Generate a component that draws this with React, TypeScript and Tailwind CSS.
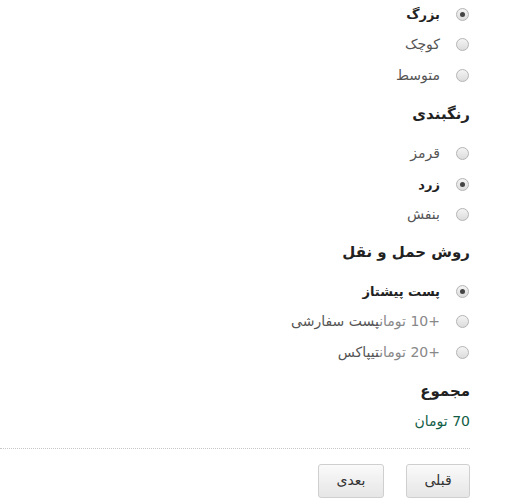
import React from "react";

type Option = { label: string; price?: string; checked?: boolean };

const groups: { title?: string; options: Option[] }[] = [
  {
    options: [
      { label: "بزرگ", checked: true },
      { label: "کوچک" },
      { label: "متوسط" },
    ],
  },
  {
    title: "رنگبندی",
    options: [{ label: "قرمز" }, { label: "زرد", checked: true }, { label: "بنفش" }],
  },
  {
    title: "روش حمل و نقل",
    options: [
      { label: "پست پیشتاز", checked: true },
      { label: "پست سفارشی", price: "+10 تومان" },
      { label: "تیپاکس", price: "+20 تومان" },
    ],
  },
];

const Radio = ({ checked }: { checked?: boolean }) => (
  <span className="flex size-[13px] shrink-0 items-center justify-center rounded-full border border-[#b4b4b4] bg-gradient-to-b from-[#f4f4f4] to-[#dcdcdc]">
    {checked && <span className="size-[5px] rounded-full bg-[#444]"></span>}
  </span>
);

const Heading = ({ children }: { children: React.ReactNode }) => (
  <h2 className="flex h-[30px] items-center text-[15px] font-bold text-[#222]">{children}</h2>
);

const App = () => {
  return (
    <div dir="rtl" className="w-[470px] bg-white font-['DejaVu_Sans',sans-serif] text-[14px] text-[#555]">
      {groups.map((g, gi) => (
        <div key={gi} className={gi === 0 ? "-mt-[1px]" : gi === 1 ? "mt-[9px]" : "mt-[7px]"}>
          {g.title && (
            <div className="mb-[9px]">
              <Heading>{g.title}</Heading>
            </div>
          )}
          {g.options.map((o) => (
            <label key={o.label} className="flex h-[30.5px] items-center gap-[16px] pr-[1px]">
              <Radio checked={o.checked} />
              <span className={o.checked ? "text-[13px] font-bold text-[#222]" : ""}>
                {o.price && <span className="text-[#888]">{o.price}</span>}
                {o.label}
              </span>
            </label>
          ))}
        </div>
      ))}

      <div className="mt-[9px]">
        <Heading>مجموع</Heading>
        <p className="flex h-[30px] items-center text-[#125c45]">70 تومان</p>
      </div>

      <div className="mt-[11px] border-t border-dotted border-[#c8c8c8]"></div>

      <div className="mt-[15px] flex gap-[22px]">
        <button className="h-[34px] w-[64px] rounded-[3px] border border-[#cfcfcf] bg-gradient-to-b from-[#fafafa] to-[#e6e6e6] text-[14px] text-[#333]">
          قبلی
        </button>
        <button className="h-[34px] w-[66px] rounded-[3px] border border-[#cfcfcf] bg-gradient-to-b from-[#fafafa] to-[#e6e6e6] text-[14px] text-[#333]">
          بعدی
        </button>
      </div>
    </div>
  );
};

export default App;
